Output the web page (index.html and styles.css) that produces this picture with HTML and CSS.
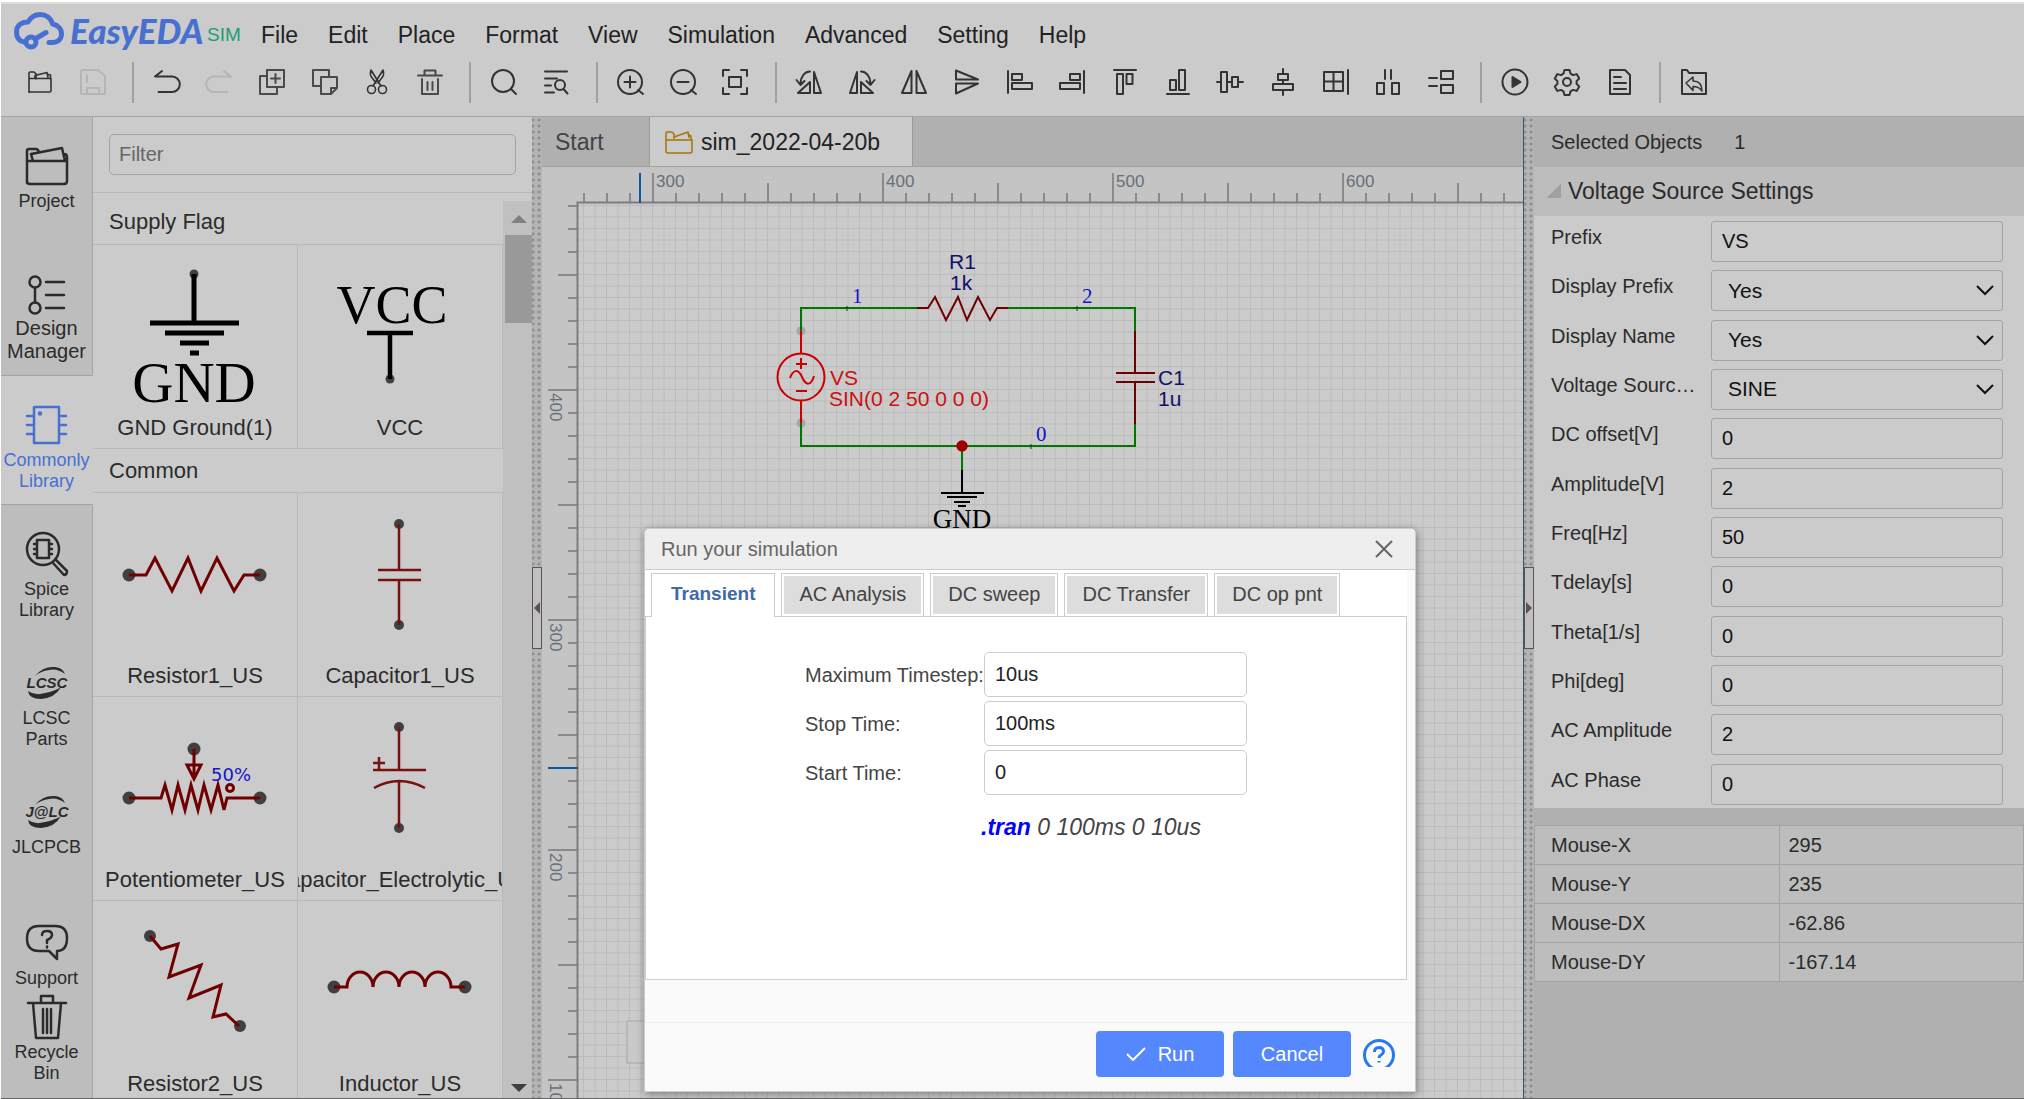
FILE: index.html
```html
<!DOCTYPE html>
<html lang="en">
<head>
<meta charset="utf-8">
<title>EasyEDA SIM</title>
<link rel="stylesheet" href="styles.css">
</head>
<body>
<div class="app">
  <header class="header">
    <div class="menubar">
      <a class="brand" href="#">
        <svg class="brand-cloud" viewBox="0 0 52 42" fill="none" stroke="currentColor" stroke-width="5" stroke-linecap="round" stroke-linejoin="round">
          <path d="M11 31C6 30 3.500 27 3.500 21S8 11 15 11C18 6 22 3.500 27 3.500C33 3.500 38 7 39.500 13C45 14 48.500 18 48.500 23S45 31.500 39 31.500H36"/>
          <circle cx="18" cy="31" r="5"/><path d="M22 28L33 21.500"/>
        </svg>
        <span class="brand-name">EasyEDA</span>
        <span class="brand-sim">SIM</span>
      </a>
      <nav class="menus">
        <button class="menu">File</button><button class="menu">Edit</button><button class="menu">Place</button><button class="menu">Format</button><button class="menu">View</button><button class="menu">Simulation</button><button class="menu">Advanced</button><button class="menu">Setting</button><button class="menu">Help</button>
      </nav>
    </div>
    <div class="toolbar">
      <button class="tool fine" aria-label="Open"><svg viewBox="0 0 28 28"><path d="M3 24.500V5q0-1 1-1h4l2 1.800v5.200M9 10V7.500L21 4.500l1 5.500M22 6.500l2.500.5v4M3 10.500h22v12q0 1.500-1.500 1.500h-19Q3 24 3 22.500z"/></svg></button>
      <button class="tool off" aria-label="Save"><svg viewBox="0 0 28 28"><path d="M4 2h15l7 6v17q0 1-1 1H3q-1 0-1-1V3q0-1 2-1zM8 26v-6h12v6M8 7v7"/></svg></button>
      <span class="sep"></span>
      <button class="tool" aria-label="Undo"><svg viewBox="0 0 28 28"><path d="M9 3L2 8.500h17a7.800 7.800 0 0 1 0 15.600H5.500"/></svg></button>
      <button class="tool off" aria-label="Redo"><svg viewBox="0 0 28 28"><path d="M19 3l7 5.500H9a7.800 7.800 0 0 0 0 15.600h13"/></svg></button>
      <button class="tool mid" aria-label="Duplicate"><svg viewBox="0 0 28 28"><path d="M9 2h17v17H9zM9 8H2v18h17v-7M17.500 6v9M13 10.500h9"/></svg></button>
      <button class="tool mid" aria-label="Copy"><svg viewBox="0 0 28 28"><path d="M10 18H2V2h16v7M10 9h16v11l-6 6H10zM20 26v-6h6"/></svg></button>
      <button class="tool fine" aria-label="Cut"><svg viewBox="0 0 28 28"><circle cx="8.500" cy="21.500" r="4"/><circle cx="19.500" cy="21.500" r="4"/><path d="M10 18L20 2q2 5-2 9l-3 4M18 18L8 2q-2 5 2 9l3 4"/></svg></button>
      <button class="tool mid" aria-label="Delete"><svg viewBox="0 0 28 28"><path d="M2 7.500h24M8.500 7V2.500h11V7M6 11v15h16V11M11.500 14v8M16.500 14v8"/></svg></button>
      <span class="sep"></span>
      <button class="tool" aria-label="Search"><svg viewBox="0 0 28 28"><circle cx="13" cy="13" r="11"/><path d="M21 21l5 5"/></svg></button>
      <button class="tool" aria-label="Find similar"><svg viewBox="0 0 28 28"><path d="M3 3.500h22M3 10.500h12M3 17.500h6M3 24.500h9"/><circle cx="18" cy="17" r="5"/><path d="M21.500 21l4 4.500"/></svg></button>
      <span class="sep"></span>
      <button class="tool" aria-label="Zoom in"><svg viewBox="0 0 28 28"><circle cx="14" cy="14" r="12"/><path d="M22 22l5 4M8.500 14h11M14 8.500v11"/></svg></button>
      <button class="tool" aria-label="Zoom out"><svg viewBox="0 0 28 28"><circle cx="14" cy="14" r="12"/><path d="M22 22l5 4M8.500 14h11"/></svg></button>
      <button class="tool" aria-label="Fit window"><svg viewBox="0 0 28 28"><path d="M2 8V2h6M20 2h6v6M26 20v6h-6M8 26H2v-6M8 9h12v10H8z"/></svg></button>
      <span class="sep"></span>
      <button class="tool" aria-label="Rotate left"><svg viewBox="0 0 28 28"><path d="M19 4v21h7zM15 14v11H3zM15 3.500C10 3.500 6 8 5.500 15M1.500 12l4 5 4-4"/></svg></button>
      <button class="tool" aria-label="Rotate right"><svg viewBox="0 0 28 28"><path d="M9 4v21H2zM13 14v11h12zM13 3.500C18 3.500 22 8 22.500 15M26.500 12l-4 5-4-4"/></svg></button>
      <button class="tool" aria-label="Flip horizontal"><svg viewBox="0 0 28 28"><path d="M11.500 3v22H2zM16.500 3v22H26z"/></svg></button>
      <button class="tool" aria-label="Flip vertical"><svg viewBox="0 0 28 28"><path d="M3 11.500V2.500l22 9zM3 15.500v10l22-10z"/></svg></button>
      <button class="tool" aria-label="Align left"><svg viewBox="0 0 28 28"><path d="M2 3v22M6 6h10v6H6zM6 15h20v6H6z"/></svg></button>
      <button class="tool" aria-label="Align right"><svg viewBox="0 0 28 28"><path d="M26 3v22M12 6h10v6H12zM2 15h20v6H2z"/></svg></button>
      <button class="tool" aria-label="Align top"><svg viewBox="0 0 28 28"><path d="M3 2h22M6 6h6v20H6zM15.500 6h6v10h-6z"/></svg></button>
      <button class="tool" aria-label="Align bottom"><svg viewBox="0 0 28 28"><path d="M3 26h22M6 12h6v10H6zM15 2h6v20h-6z"/></svg></button>
      <button class="tool" aria-label="Align middle"><svg viewBox="0 0 28 28"><path d="M5 4h6v20H5zM16 9h6v10h-6zM1 14h4M11 14h5M22 14h5"/></svg></button>
      <button class="tool" aria-label="Align center"><svg viewBox="0 0 28 28"><path d="M4 16h20v6H4zM9 6h10v6H9zM14 1v5M14 12v4M14 22v5"/></svg></button>
      <button class="tool" aria-label="Align grid"><svg viewBox="0 0 28 28"><path d="M2 4h19v19H2zM2 13.500h19M11.500 4v19M26 2v24"/></svg></button>
      <button class="tool" aria-label="Distribute horizontally"><svg viewBox="0 0 28 28"><path d="M3 15h7v11H3zM18 15h7v11h-7zM11 2v9M17 2v9"/></svg></button>
      <button class="tool" aria-label="Distribute vertically"><svg viewBox="0 0 28 28"><path d="M14 3h12v8H14zM14 17h12v8H14zM2 10h8M2 18h8"/></svg></button>
      <span class="sep"></span>
      <button class="tool" aria-label="Run simulation"><svg viewBox="0 0 28 28"><circle cx="14" cy="14" r="12.500"/><path d="M11.500 9v10l8-5z" fill="currentColor"/></svg></button>
      <button class="tool" aria-label="Settings"><svg viewBox="0 0 28 28"><path d="M11.500 2h5l1 3.600 2.600 1.500 3.600-1 2.500 4.400-2.600 2.600v2.800l2.600 2.600-2.500 4.400-3.600-1-2.600 1.500-1 3.600h-5l-1-3.600-2.600-1.500-3.600 1-2.500-4.400 2.600-2.600v-2.800L1.800 10.500l2.500-4.400 3.600 1 2.600-1.500z"/><circle cx="14" cy="14" r="4"/></svg></button>
      <button class="tool" aria-label="Report"><svg viewBox="0 0 28 28"><path d="M4 2h15l5 5v19H4zM8 9h7M8 15h12M8 21h12"/></svg></button>
      <span class="sep"></span>
      <button class="tool" aria-label="Exit simulation"><svg viewBox="0 0 28 28"><path d="M2 26V2h5l2 3h17v21z"/><path stroke-width="1.500" d="M6 15l7-6v4c6 0 9 4 9 10-2-3-5-4.500-9-4.500v4z"/></svg></button>
    </div>
  </header>

  <div class="body">
    <nav class="rail">
      <button class="rail-item"><svg viewBox="0 0 44 40"><path d="M2 37V5q0-2 2-2h7q2 0 3 3M2 15h40v20q0 3-3 3H5q-3 0-3-3zM8 15L6 8 37 2l3 13M39 8q3 0 3 3v4"/></svg><span>Project</span></button>
      <button class="rail-item large"><svg viewBox="0 0 44 40"><circle cx="10" cy="7" r="5.500"/><circle cx="10" cy="33" r="5.500"/><path d="M10 13v14M21 7h18M21 20h18M21 33h18"/></svg><span>Design<br>Manager</span></button>
      <button class="rail-item active"><svg viewBox="0 0 44 40"><path d="M9 2h25v36H9zM2 11h7M2 20h7M2 29h7M34 11h7M34 20h7M34 29h7"/><circle cx="15" cy="8.500" r="1" /></svg><span>Commonly<br>Library</span></button>
      <button class="rail-item"><svg viewBox="0 0 44 40"><circle cx="18" cy="15" r="16"/><path d="M12 6h12v18H12zM9 10h3M9 15h3M9 20h3M24 10h3M24 15h3M24 20h3M28 29l11 12q3 0 3-4L31 26"/></svg><span>Spice<br>Library</span></button>
      <button class="rail-item"><svg viewBox="0 0 44 40"><path class="solid" d="M10 13Q18 3 30 4Q38 5 40 11Q32 5 24 7Q16 8 10 13zM3 28Q10 33 20 30Q30 28 36 24Q30 35 16 36Q4 36 3 28z"/><text class="rail-logo" x="22" y="25" text-anchor="middle">LCSC</text></svg><span>LCSC<br>Parts</span></button>
      <button class="rail-item"><svg viewBox="0 0 44 40"><path class="solid" d="M10 13Q18 3 30 4Q38 5 40 11Q32 5 24 7Q16 8 10 13zM3 28Q10 33 20 30Q30 28 36 24Q30 35 16 36Q4 36 3 28z"/><text class="rail-logo" x="22" y="25" text-anchor="middle">J@LC</text></svg><span>JLCPCB</span></button>
      <button class="rail-item short"><svg viewBox="0 0 44 40"><path d="M14 3h16q12 0 12 12 0 13-10 13v8l-8-8H14Q2 28 2 15.500 2 3 14 3zM17 12q0-4 5-4t5 4q0 3-5 5v3M22 23.500v1"/></svg><span>Support</span></button>
      <button class="rail-item short last"><svg viewBox="0 0 44 40"><path d="M3 6h38M16 6v-7h12v7M8 6l3 35h22l3-35M18 12v24M22 12v24M26 12v24"/></svg><span>Recycle<br>Bin</span></button>
    </nav>

    <aside class="library">
      <div class="filter-row"><input class="filter" type="text" placeholder="Filter" aria-label="Filter"></div>
      <div class="parts-wrap">
        <div class="parts">
          <h2 class="parts-title first">Supply Flag</h2>
          <div class="cells">
            <figure class="cell"><svg viewBox="0 0 204 168"><circle cx="101" cy="29" r="4.500" fill="#404040"/><path d="M101 29v49" stroke="#000" stroke-width="5"/><path d="M57 78h89M72 88h59M87 98h29M97 108h9" stroke="#000" stroke-width="5"/><text class="sym" x="101" y="157" text-anchor="middle">GND</text></svg><figcaption>GND Ground(1)</figcaption></figure>
            <figure class="cell"><svg viewBox="0 0 204 168"><text class="sym small" x="94" y="78" text-anchor="middle">VCC</text><circle cx="92" cy="134" r="4.500" fill="#404040"/><path d="M69 88h46M92 88v46" stroke="#000" stroke-width="4.500"/></svg><figcaption>VCC</figcaption></figure>
          </div>
          <h2 class="parts-title">Common</h2>
          <div class="cells">
            <figure class="cell"><svg viewBox="0 0 204 168"><circle class="pin" cx="36" cy="82" r="6.500"/><circle class="pin" cx="167" cy="82" r="6.500"/><path class="part" d="M36 82h17l9-17 17 33 16-33 13 33 16-33 17 33 10-16h16"/></svg><figcaption>Resistor1_US</figcaption></figure>
            <figure class="cell"><svg viewBox="0 0 204 168"><circle class="pin" cx="101" cy="31" r="5"/><circle class="pin" cx="101" cy="132" r="5"/><path class="part thin" d="M101 31v46M80 77h43M80 87h43M101 87v45"/></svg><figcaption>Capacitor1_US</figcaption></figure>
            <figure class="cell"><svg viewBox="0 0 204 168"><circle class="pin" cx="36" cy="101" r="6.500"/><circle class="pin" cx="167" cy="101" r="6.500"/><circle class="pin" cx="101" cy="52" r="6.500"/><path class="part" d="M36 101h32l4-13 7 25 6-25 7 25 6-25 7 25 6-25 7 25 7-25 6 25 3-12h33M101 52v28M94 68h14l-7 14z"/><circle class="part" cx="137" cy="91" r="3.500"/><text class="percent" x="118" y="84">50%</text></svg><figcaption>Potentiometer_US</figcaption></figure>
            <figure class="cell"><svg viewBox="0 0 204 168"><circle class="pin" cx="101" cy="30" r="5"/><circle class="pin" cx="101" cy="131" r="5"/><path class="part thin" d="M101 30v43M75 73h53M81 60v12M75 66h12M76 91q25-14 51 0M101 84v47"/></svg><figcaption><span>Capacitor_Electrolytic_US</span></figcaption></figure>
            <figure class="cell"><svg viewBox="0 0 204 168"><circle class="pin" cx="57" cy="35" r="6"/><circle class="pin" cx="147" cy="125" r="6"/><path class="part" d="M57 35l11 13 17-5-9 33 32-12-12 33 32-13-8 32 13-3 13 12"/></svg><figcaption>Resistor2_US</figcaption></figure>
            <figure class="cell"><svg viewBox="0 0 204 168"><circle class="pin" cx="36" cy="86" r="6.500"/><circle class="pin" cx="167" cy="86" r="6.500"/><path class="part" d="M36 86h13a13 15 0 0 1 26 0a13 15 0 0 1 26 0a13 15 0 0 1 26 0a13 15 0 0 1 26 0h14"/></svg><figcaption>Inductor_US</figcaption></figure>
          </div>
        </div>
        <div class="scrollbar"><span class="arrow up"></span><span class="thumb"></span><span class="arrow down"></span></div>
      </div>
    </aside>

    <div class="splitter"><button class="grip" aria-label="Collapse library"><span class="grip-arrow left"></span></button></div>

    <main class="editor">
      <div class="tabs">
        <button class="tab">Start</button>
        <button class="tab current"><svg viewBox="0 0 28 24"><path d="M1 22V3q0-1 1-1h5l2 2v5M9 7l14-5 1 6M24 5l2 1v4M1 10h26v11q0 2-2 2H3q-2 0-2-2z"/></svg>sim_2022-04-20b</button>
      </div>
      <div class="workspace">
        <svg class="sheet" width="100%" height="100%">
          <defs>
            <pattern id="grid" x="110" y="222" width="23" height="23" patternUnits="userSpaceOnUse"><path d="M.5 0v23M0 .5h23M12 0v23M0 12h23" stroke="#bcbcbc" fill="none"/></pattern>
            <pattern id="rulerX" x="110" y="0" width="230" height="36" patternUnits="userSpaceOnUse"><path d="M1 6v29M24 26v9M47 26v9M70 26v9M93 26v9M116 16v19M139 26v9M162 26v9M185 26v9M208 26v9" stroke="#8a8a8a" stroke-width="2"/></pattern>
            <pattern id="rulerY" x="0" y="222" width="36" height="230" patternUnits="userSpaceOnUse"><path d="M6 1h29M26 24h9M26 47h9M26 70h9M26 93h9M16 116h19M26 139h9M26 162h9M26 185h9M26 208h9" stroke="#8a8a8a" stroke-width="2"/></pattern>
          </defs>
          <rect width="100%" height="100%" fill="#c4c4c4"/>
          <svg x="35" y="35" width="100%" height="100%"><rect width="100%" height="100%" fill="#cbcbcb"/></svg>
          <rect x="36" y="36" width="100%" height="100%" fill="url(#grid)"/>
          <rect x="36" y="0" width="100%" height="36" fill="url(#rulerX)"/>
          <rect x="0" y="36" width="36" height="100%" fill="url(#rulerY)"/>
          <path d="M35.500 2000V35.500H2000" stroke="#7d7d7d" stroke-width="2" fill="none"/>
          <path d="M98 6v30M6 601h30" stroke="#0b57a5" stroke-width="2"/>
          <g class="ruler-num">
            <text x="114" y="20">300</text><text x="344" y="20">400</text><text x="574" y="20">500</text><text x="804" y="20">600</text>
            <text transform="translate(8 226) rotate(90)">400</text><text transform="translate(8 456) rotate(90)">300</text><text transform="translate(8 686) rotate(90)">200</text><text transform="translate(8 916) rotate(90)">100</text>
          </g>
          <circle cx="259" cy="164" r="4.500" fill="#a6a6a6"/><circle cx="259" cy="256" r="4.500" fill="#a6a6a6"/>
          <path class="wire" d="M375 141H259v23M466 141H593v23M593 257v22H259v-23M420 279v24"/>
          <path d="M305 139v5M535 139v5M489 277v5" stroke="#104010"/>
          <path class="sch-part" d="M375 141h11l7-11 11 23 12-23 9 23 11-23 12 23 7-12h11M593 164v42M574 206h39M574 215h39M593 215v42"/>
          <path class="source" d="M259 164v23M259 234v22M259 191v11M254 197h11M254 224h11M248 211c3-8 8-10 12-1s9 9 12-1"/>
          <circle class="source" cx="259" cy="210" r="23.500"/>
          <circle cx="420" cy="279" r="5.700" fill="#a00000"/>
          <path d="M420 303v23M399 326h43M405 330h30M412 335h16M416 339h8" stroke="#000" stroke-width="2"/>
          <text class="sch-gnd" x="420" y="361" text-anchor="middle">GND</text>
          <g class="sch-label"><text x="407" y="102">R1</text><text x="408" y="123">1k</text><text x="616" y="218">C1</text><text x="616" y="239">1u</text></g>
          <g class="sch-label picked"><text x="288" y="218">VS</text><text x="287" y="239">SIN(0 2 50 0 0 0)</text></g>
          <g class="net"><text x="310" y="136">1</text><text x="540" y="136">2</text><text x="494" y="274">0</text></g>
          <rect x="85" y="854" width="60" height="42" fill="#c9c9c9" stroke="#a8a8a8"/>
        </svg>

        <div class="dialog" role="dialog" aria-labelledby="dialog-title">
          <div class="dialog-head">
            <h1 class="dialog-title" id="dialog-title">Run your simulation</h1>
            <button class="close" aria-label="Close"><svg viewBox="0 0 18 18"><path d="M1 1l16 16M17 1L1 17"/></svg></button>
          </div>
          <div class="dialog-body">
            <div class="sim-tabs" role="tablist">
              <button class="sim-tab selected" role="tab">Transient</button>
              <button class="sim-tab" role="tab">AC Analysis</button>
              <button class="sim-tab" role="tab">DC sweep</button>
              <button class="sim-tab" role="tab">DC Transfer</button>
              <button class="sim-tab" role="tab">DC op pnt</button>
            </div>
            <div class="sim-panel">
              <form class="sim-form">
                <label for="maxstep">Maximum Timestep:</label><input id="maxstep" type="text" value="10us">
                <label for="stop">Stop Time:</label><input id="stop" type="text" value="100ms">
                <label for="start">Start Time:</label><input id="start" type="text" value="0">
                <p class="directive"><b>.tran</b> 0 100ms 0 10us</p>
              </form>
            </div>
          </div>
          <div class="dialog-foot">
            <button class="action run"><svg viewBox="0 0 20 14"><path d="M1 7l6 6L19 1"/></svg>Run</button>
            <button class="action cancel">Cancel</button>
            <a class="help" href="#" aria-label="Help"><svg viewBox="0 0 32 32"><circle cx="16" cy="16" r="14.500"/><path d="M11.500 13q0-4.500 4.500-4.500t4.500 4q0 2-2.500 3.500-2 1-2 3M16 22v1.500"/></svg></a>
          </div>
        </div>
      </div>
    </main>

    <div class="splitter right"><button class="grip" aria-label="Collapse properties"><span class="grip-arrow"></span></button></div>

    <aside class="props">
      <div class="selected-bar"><span>Selected Objects</span><span>1</span></div>
      <h2 class="props-title"><span class="fold"></span>Voltage Source Settings</h2>
      <form class="fields">
        <div class="field"><label for="p1">Prefix</label><input id="p1" type="text" value="VS"></div>
        <div class="field"><label for="p2">Display Prefix</label><span class="pick"><select id="p2"><option>Yes</option><option>No</option></select><svg viewBox="0 0 18 11"><path d="M1 1l8 8 8-8"/></svg></span></div>
        <div class="field"><label for="p3">Display Name</label><span class="pick"><select id="p3"><option>Yes</option><option>No</option></select><svg viewBox="0 0 18 11"><path d="M1 1l8 8 8-8"/></svg></span></div>
        <div class="field"><label for="p4">Voltage Source Type</label><span class="pick"><select id="p4"><option>SINE</option></select><svg viewBox="0 0 18 11"><path d="M1 1l8 8 8-8"/></svg></span></div>
        <div class="field"><label for="p5">DC offset[V]</label><input id="p5" type="text" value="0"></div>
        <div class="field"><label for="p6">Amplitude[V]</label><input id="p6" type="text" value="2"></div>
        <div class="field"><label for="p7">Freq[Hz]</label><input id="p7" type="text" value="50"></div>
        <div class="field"><label for="p8">Tdelay[s]</label><input id="p8" type="text" value="0"></div>
        <div class="field"><label for="p9">Theta[1/s]</label><input id="p9" type="text" value="0"></div>
        <div class="field"><label for="p10">Phi[deg]</label><input id="p10" type="text" value="0"></div>
        <div class="field"><label for="p11">AC Amplitude</label><input id="p11" type="text" value="2"></div>
        <div class="field"><label for="p12">AC Phase</label><input id="p12" type="text" value="0"></div>
      </form>
      <table class="mouse">
        <tbody>
          <tr><th scope="row">Mouse-X</th><td>295</td></tr>
          <tr><th scope="row">Mouse-Y</th><td>235</td></tr>
          <tr><th scope="row">Mouse-DX</th><td>-62.86</td></tr>
          <tr><th scope="row">Mouse-DY</th><td>-167.14</td></tr>
        </tbody>
      </table>
    </aside>
  </div>
</div>
</body>
</html>
```
FILE: styles.css
```css
* { box-sizing: border-box; }
body {
  margin: 0;
  background: #fff;
  color: #2b2b2b;
  font: 20px/24px "Liberation Sans", Arial, sans-serif;
}
button, input, select { font: inherit; color: inherit; margin: 0; }
button { border: 0; padding: 0; background: none; cursor: pointer; }
h1, h2, p, figure { margin: 0; font-weight: normal; }
svg { display: block; }

.app {
  height: 100vh;
  display: flex;
  flex-direction: column;
  padding: 2px 1px 0;
  overflow: hidden;
}

/* Menu bar and toolbar */
.header {
  flex: none;
  height: 115px;
  background: #cbcbcb;
  border-top: 2px solid #dcdcdc;
  border-bottom: 1px solid #a3a3a3;
}
.menubar { display: flex; align-items: center; height: 50px; padding-top: 6px; }
.brand {
  display: flex;
  align-items: center;
  width: 246px;
  padding-left: 12px;
  color: #4870d2;
  text-decoration: none;
}
.brand-cloud { width: 52px; height: 42px; margin-right: 5px; }
.brand-name { font: italic 900 35px/40px Lato, sans-serif; width: 137px; padding-bottom: 4px; }
.brand-sim { color: #229c78; font-size: 19px; padding-top: 6px; }
.menus { display: flex; gap: 30px; padding: 6px 14px 0; }
.menu { font-size: 23px; line-height: 38px; color: #222; }
.toolbar {
  display: flex;
  align-items: center;
  height: 56px;
  max-width: 1719px;
  padding-left: 13px;
}
.tool { flex: 1; display: flex; justify-content: center; color: #333; }
.tool svg {
  width: 28px;
  height: 28px;
  fill: none;
  stroke: currentColor;
  stroke-width: 2;
  stroke-linejoin: round;
  stroke-linecap: round;
}
.tool.fine svg { stroke-width: 1.6; }
.tool.mid { color: #4a4a4a; }
.tool.off { color: #b5b5b5; }
.sep { width: 2px; height: 41px; margin: 0 6px 0 13px; background: #a0a0a0; }

.body { flex: 1; min-height: 0; display: flex; border-bottom: 1px solid #666; }

/* Left rail */
.rail {
  flex: none;
  width: 92px;
  display: flex;
  flex-direction: column;
  background: #bdbdbd;
}
.rail-item {
  flex: none;
  height: 129px;
  padding-top: 29px;
  display: flex;
  flex-direction: column;
  align-items: center;
  justify-content: flex-start;
  gap: 5px;
  font-size: 18px;
  line-height: 21px;
  border-right: 1px solid #a3a3a3;
}
.rail-item svg {
  flex: none;
  width: 44px;
  height: 40px;
  overflow: visible;
  fill: none;
  stroke: currentColor;
  stroke-width: 2.5;
  stroke-linecap: round;
  stroke-linejoin: round;
}
.rail-item .solid, .rail-logo { fill: currentColor; stroke: none; }
.rail-logo { font: italic bold 15px "Liberation Sans", sans-serif; }
.rail-item.large { font-size: 20px; line-height: 23px; gap: 2px; }
.rail-item.active {
  height: 130px;
  color: #4870d2;
  background: #cbcbcb;
  border-right-color: #cbcbcb;
  border-top: 1px solid #a3a3a3;
  border-bottom: 1px solid #a3a3a3;
}
.rail-item.short { height: 98px; padding-top: 31px; }
.rail-item.last { flex: 1 0 0; padding-top: 7px; }

/* Parts library */
.library {
  flex: none;
  width: 439px;
  display: flex;
  flex-direction: column;
  background: #cbcbcb;
}
.filter-row { padding: 17px 16px; border-bottom: 1px solid #b9b9b9; }
.filter {
  display: block;
  width: 100%;
  height: 41px;
  padding: 0 9px;
  background: transparent;
  border: 1px solid #a3a3a3;
  border-radius: 5px;
}
.filter::placeholder { color: #666; opacity: 1; }
.parts-wrap { flex: 1; min-height: 0; display: flex; }
.parts { flex: 1; min-width: 0; overflow: hidden; }
.parts-title {
  padding-left: 16px;
  font-size: 22px;
  line-height: 43px;
  border-bottom: 1px solid #b9b9b9;
}
.parts-title.first { padding: 7px 0 1px 16px; }
.cells { display: grid; grid-template-columns: 1fr 1fr; }
.cell {
  height: 204px;
  overflow: hidden;
  border-right: 1px solid #b9b9b9;
  border-bottom: 1px solid #b9b9b9;
}
.cell svg { width: 204px; height: 168px; }
.cell figcaption {
  display: flex;
  justify-content: center;
  font-size: 22px;
  line-height: 30px;
  white-space: nowrap;
}
.sym { font: 57px "Liberation Serif", serif; fill: #000; }
.sym.small { font-size: 54px; }
.pin { fill: #404040; }
.part { fill: none; stroke: #700000; stroke-width: 3; }
.part.thin { stroke-width: 2.5; stroke: #781010; }
.percent { font: 18px "DejaVu Sans", sans-serif; fill: #1414c8; }
.scrollbar {
  width: 29px;
  margin-top: 8px;
  padding-left: 2px;
  display: flex;
  flex-direction: column;
  align-items: center;
  background: #c0c0c0;
}
.arrow { border: 8px solid transparent; border-top-width: 0; border-bottom: 8px solid #808080; margin: 14px 0 12px; }
.arrow.down { border-width: 8px 8px 0; border-top-color: #404040; margin: auto 0 6px; }
.thumb { width: 100%; height: 88px; background: #999; }

/* Splitters */
.splitter {
  flex: none;
  width: 10px;
  display: flex;
  align-items: center;
  background: radial-gradient(circle, #909090 1px, transparent 2px) 4px 0 / 6px 6px, #b4b4b4;
}
.splitter.right { width: 11px; border-left: 1px solid #34557a; }
.grip {
  width: 10px;
  height: 82px;
  display: flex;
  align-items: center;
  justify-content: center;
  background: #c0c0c0;
  border: 1px solid #5c5252;
}
.grip-arrow { border: 6px solid transparent; border-right-width: 0; border-left-color: #5c5252; }
.grip-arrow.left { border-width: 6px 6px 6px 0; border-right-color: #5c5252; }

/* Editor */
.editor { flex: 1; min-width: 0; display: flex; flex-direction: column; }
.tabs {
  flex: none;
  height: 50px;
  display: flex;
  background: #b0b0b0;
  border-bottom: 1px solid #a0a0a0;
}
.tab { width: 107px; padding-left: 13px; text-align: left; font-size: 23px; color: #444; }
.tab.current {
  width: auto;
  padding: 0 32px 0 15px;
  display: flex;
  align-items: center;
  gap: 8px;
  color: #222;
  background: #cbcbcb;
  border: solid #999;
  border-width: 0 1px;
}
.tab svg { width: 28px; height: 24px; fill: none; stroke: #a87408; stroke-width: 1.5; }
.workspace { flex: 1; min-height: 0; position: relative; }
.sheet { overflow: hidden; }
.ruler-num { font: 17px "Liberation Sans", sans-serif; fill: #66707c; }
.wire { fill: none; stroke: #007800; stroke-width: 2; }
.sch-part { fill: none; stroke: #700000; stroke-width: 2; }
.source { fill: none; stroke: #cc0000; stroke-width: 2; }
.sch-label { font: 21px "Liberation Sans", sans-serif; fill: #10106c; }
.sch-label.picked { fill: #cc1010; }
.sch-gnd { font: 27px "Liberation Serif", serif; }
.net { font: 21px "Liberation Serif", serif; fill: #1414c8; }

/* Simulation dialog */
.dialog {
  position: absolute;
  left: 102px;
  bottom: 6px;
  width: 772px;
  display: flex;
  flex-direction: column;
  background: #fafafa;
  border: 1px solid #ccc;
  border-radius: 5px 5px 0 0;
  box-shadow: 1px 2px 8px rgba(0, 0, 0, .4);
}
.dialog-head {
  height: 41px;
  padding: 0 22px 0 16px;
  display: flex;
  align-items: center;
  justify-content: space-between;
  background: #eee;
  border-bottom: 1px solid #ccc;
  border-radius: 5px 5px 0 0;
}
.dialog-title { font-size: 20px; color: #666; }
.close svg { width: 18px; height: 18px; fill: none; stroke: #666; stroke-width: 2; }
.dialog-body { padding: 0 8px 42px 0; border-bottom: 1px solid #eee; }
.sim-tabs { display: flex; gap: 6px; padding: 3px 6px 0; background: #fff; }
.sim-tab {
  height: 43px;
  padding: 0 17px 2px;
  background: #ddd;
  color: #444;
  border: 1px solid #ccc;
  border-bottom: 0;
  box-shadow: inset 0 0 0 2px #fff;
}
.sim-tab.selected {
  position: relative;
  margin-bottom: -1px;
  height: 44px;
  background: #fff;
  color: #4169a8;
  font-size: 19px;
  font-weight: bold;
  padding: 0 19px 3px;
}
.sim-panel { height: 364px; padding-top: 35px; background: #fff; border: 1px solid #ccc; }
.sim-form {
  width: 442px;
  margin: 0 auto;
  display: grid;
  grid-template-columns: 179px 1fr;
  gap: 4px 0;
  align-items: center;
  color: #444;
}
.sim-form label { white-space: nowrap; }
.sim-form input {
  width: 100%;
  height: 45px;
  padding: 0 10px;
  color: #222;
  background: #fff;
  border: 1px solid #ccc;
  border-radius: 5px;
}
.directive {
  grid-column: 1 / -1;
  padding: 16px 0 0 176px;
  font-size: 23px;
  line-height: 24px;
  font-style: italic;
}
.directive b { color: #00f; }
.dialog-foot {
  display: flex;
  justify-content: flex-end;
  gap: 9px;
  padding: 8px 20px 14px;
}
.action {
  height: 46px;
  display: flex;
  align-items: center;
  justify-content: center;
  gap: 12px;
  color: #fff;
  background: #58f;
  border-radius: 4px;
}
.action svg { width: 20px; height: 14px; fill: none; stroke: #fff; stroke-width: 2; }
.run { width: 128px; }
.cancel { width: 118px; }
.help { padding: 8px 0 0 3px; height: 36px; overflow: hidden; }
.help svg { width: 32px; height: 32px; fill: none; stroke: #2878f0; stroke-width: 3; }

/* Properties */
.props { flex: none; width: 490px; background: #b0b0b0; }
.selected-bar { height: 50px; padding-left: 17px; display: flex; align-items: center; gap: 32px; }
.props-title {
  height: 49px;
  padding: 0 0 2px 13px;
  display: flex;
  align-items: center;
  gap: 7px;
  font-size: 23px;
  background: #bdbdbd;
}
.fold { width: 14px; height: 14px; background: linear-gradient(135deg, transparent 50%, #a0a0a0 50%); }
.fields {
  display: grid;
  grid-auto-rows: 1fr;
  min-height: 592px;
  padding: 0 21px 0 17px;
  background: #cbcbcb;
}
.field { display: grid; grid-template-columns: 145px 1fr; column-gap: 15px; align-items: start; }
.field label { line-height: 42px; overflow: hidden; white-space: nowrap; text-overflow: ellipsis; }
.field input, .field select {
  width: 100%;
  height: 41px;
  margin-top: 5px;
  padding: 0 10px;
  color: #111;
  background: transparent;
  border: 1px solid #a3a3a3;
  border-radius: 3px;
}
.pick { position: relative; display: block; }
.field select { display: block; appearance: none; padding: 0 16px; font-size: 21px; }
.pick svg {
  position: absolute;
  right: 9px;
  top: 20px;
  width: 18px;
  height: 11px;
  fill: none;
  stroke: #111;
  stroke-width: 2;
  pointer-events: none;
}
.mouse { width: 100%; margin-top: 17px; border-collapse: collapse; table-layout: fixed; background: #bdbdbd; }
.mouse th, .mouse td {
  height: 39px;
  padding: 0 9px 0 16px;
  text-align: left;
  font-weight: normal;
  line-height: 24px;
  border: 1px solid #a3a3a3;
}
.mouse td { padding-left: 9px; }
```
